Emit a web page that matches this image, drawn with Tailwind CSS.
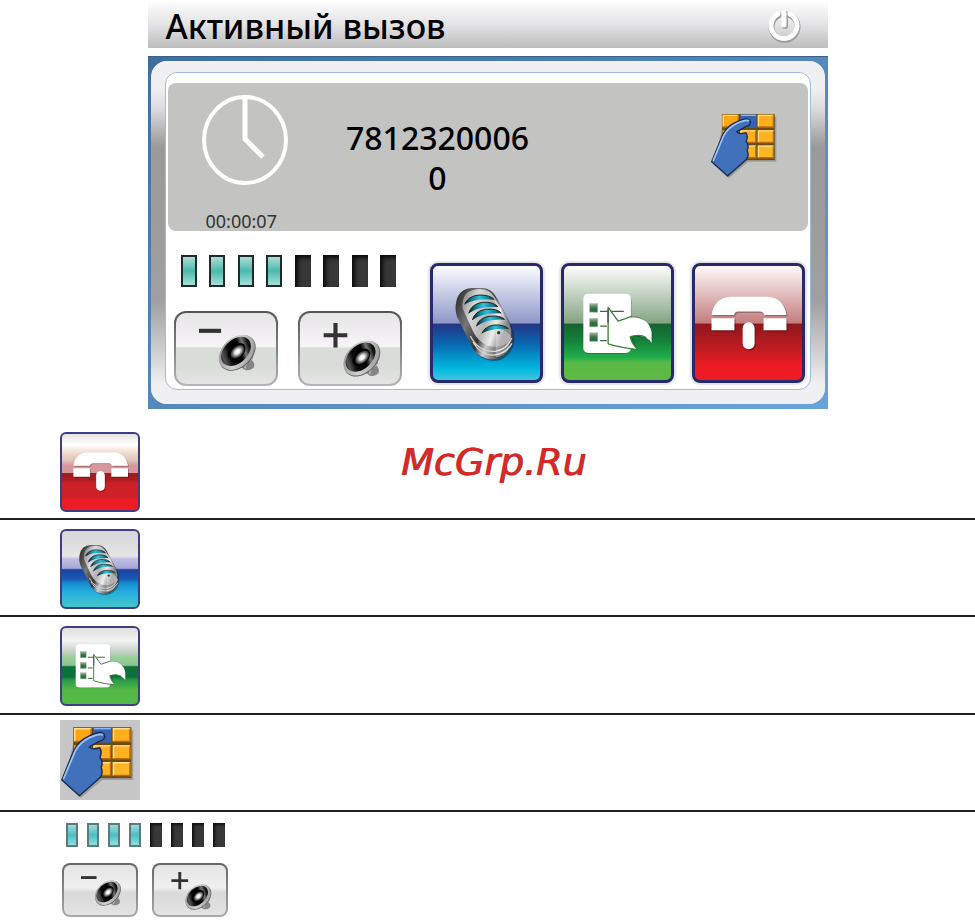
<!DOCTYPE html>
<html lang="ru">
<head>
<meta charset="utf-8">
<meta name="viewport" content="width=device-width, initial-scale=1">
<title>Активный вызов</title>
<script src="https://cdn.jsdelivr.net/npm/@tailwindcss/browser@4"></script>
</head>
<body class="bg-white text-black font-['Noto_Sans','DejaVu_Sans',sans-serif]">

<!-- Shared icon sprite -->
<svg class="absolute size-0" aria-hidden="true">
  <defs>
    <linearGradient id="metal" x1="0" y1="0" x2="1" y2="0.4">
      <stop offset="0" stop-color="#777"/><stop offset=".3" stop-color="#d8d8d8"/><stop offset=".6" stop-color="#b4b4b4"/><stop offset=".8" stop-color="#eee"/><stop offset="1" stop-color="#888"/>
    </linearGradient>
    <linearGradient id="base" x1="0" y1="0" x2="1" y2="0.5">
      <stop offset="0" stop-color="#222"/><stop offset=".35" stop-color="#777"/><stop offset=".6" stop-color="#333"/><stop offset=".75" stop-color="#ccc"/><stop offset="1" stop-color="#444"/>
    </linearGradient>
    <linearGradient id="slot" x1="0" y1="0" x2="1" y2="0">
      <stop offset="0" stop-color="#111"/><stop offset=".25" stop-color="#0f7f93"/><stop offset=".5" stop-color="#2cc3d8"/><stop offset=".8" stop-color="#0c7f92"/><stop offset="1" stop-color="#222"/>
    </linearGradient>
    <linearGradient id="key" x1="0" y1="0" x2="1" y2="1">
      <stop offset="0" stop-color="#ffa312"/><stop offset="1" stop-color="#ffb829"/>
    </linearGradient>
    <linearGradient id="rim" x1="0" y1="0" x2="1" y2="1">
      <stop offset="0" stop-color="#8a8a8a"/><stop offset=".5" stop-color="#d2d2d2"/><stop offset="1" stop-color="#8a8a8a"/>
    </linearGradient>
    <linearGradient id="bowl" x1="0" y1="0" x2="1" y2="0.3">
      <stop offset="0" stop-color="#000"/><stop offset=".2" stop-color="#555"/><stop offset=".4" stop-color="#0a0a0a"/><stop offset=".7" stop-color="#000"/><stop offset=".85" stop-color="#777"/><stop offset="1" stop-color="#111"/>
    </linearGradient>
    <radialGradient id="cone" cx=".5" cy=".5" r=".5">
      <stop offset="0" stop-color="#fff"/><stop offset=".35" stop-color="#eee"/><stop offset=".75" stop-color="#666"/><stop offset="1" stop-color="#222"/>
    </radialGradient>
    <linearGradient id="checks" x1="0" y1="0" x2="0" y2="1">
      <stop offset="0" stop-color="#9cb59b"/><stop offset=".5" stop-color="#3b7044"/><stop offset="1" stop-color="#14713a"/>
    </linearGradient>
  </defs>

  <symbol id="phone" viewBox="266 138 240 172">
    <g fill="#000" opacity=".25" transform="translate(4 4)">
      <path d="M276 198Q284 146 334 143H444Q494 146 502 198H436Q432 188 422 188H356Q346 188 344 198Z"/>
      <path d="M276 208H345V244H276ZM433 208H502V244H433Z"/><rect x="370" y="220" width="36" height="82" rx="18"/>
    </g>
    <g fill="#fff">
      <path d="M276 198Q284 146 334 143H444Q494 146 502 198H436Q432 188 422 188H356Q346 188 344 198Z"/>
      <path d="M276 208H345V244H276ZM433 208H502V244H433Z"/><rect x="370" y="220" width="36" height="82" rx="18"/>
    </g>
  </symbol>

  <symbol id="mic" viewBox="104 109 190 228">
    <path d="M112 168Q118 122 163 122H194Q219 124 232 148L274 228Q288 258 282 290Q262 339 220 337Q184 335 164 304L116 208Q108 188 112 168Z" fill="#000" opacity=".35"/>
    <path d="M109 164Q115 119 160 118H190Q215 120 228 144L270 224Q284 254 278 286Q258 334 216 332Q180 330 160 300L112 204Q105 184 109 164Z" fill="url(#base)"/>
    <path d="M152 262Q178 312 226 308Q262 304 276 268M160 280Q184 322 224 319Q260 314 277 284" fill="none" stroke="#d4d4d4" stroke-width="4"/>
    <path d="M130 158Q134 122 180 121Q210 121 224 144L268 226Q280 252 270 276Q248 300 208 292Q174 280 160 248L130 182Q126 170 130 158Z" fill="url(#metal)"/>
    <path d="M229 252L228 326Q250 323 264 306L275 266Q262 240 229 240Z" fill="#fff" opacity=".35"/>
    <g fill="url(#slot)">
      <path d="M135 167Q145 142 178 139Q212 139 224 153Q170 148 135 167Z"/>
      <path d="M147 194Q155 166 188 161Q224 159 235 175Q178 171 147 194Z"/>
      <path d="M158 214Q166 187 198 182Q234 179 245 194Q190 190 158 214Z"/>
      <path d="M170 233Q178 208 208 203Q244 199 255 213Q202 209 170 233Z"/>
      <path d="M187 254Q195 234 222 229Q254 227 267 241Q218 237 187 254Z"/>
    </g>
    <path d="M135 167Q145 142 178 139Q212 139 224 153M147 194Q155 166 188 161Q224 159 235 175M158 214Q166 187 198 182Q234 179 245 194M170 233Q178 208 208 203Q244 199 255 213M187 254Q195 234 222 229Q254 227 267 241" fill="none" stroke="#222" stroke-width="3"/>
    <circle cx="237" cy="252" r="5" fill="#333"/>
  </symbol>

  <symbol id="tools" viewBox="487 128 218 188">
    <path d="M510 137H622Q638 137 638 153V200Q690 200 701 250V282Q680 258 641 262L656 302L636 296Q630 313 618 313H510Q498 313 498 301V149Q498 137 510 137Z" fill="#000" opacity=".2"/>
    <rect x="494" y="133" width="142" height="177" rx="14" fill="#fff"/>
    <g fill="url(#checks)" stroke="#9db59d" stroke-width="2">
      <rect x="513" y="163" width="24" height="25"/><rect x="513" y="207" width="24" height="25"/><rect x="513" y="250" width="24" height="25"/>
    </g>
    <path d="M544 186H615M544 230H564M544 273H564" stroke="#37693e" stroke-width="4"/>
    <path d="M568 174L598 215Q630 202 646 204Q690 206 698 248V280Q680 254 634 259Q640 284 657 300Q620 296 568 283Z" fill="#fff"/>
    <path d="M568 283V174L598 215L638 201M568 283Q610 296 657 300Q638 282 634 262Q662 252 682 264" fill="none" stroke="#3f7f3c" stroke-width="4" stroke-linejoin="round"/>
    <path d="M568 180V220" stroke="#53635a" stroke-width="5"/>
  </symbol>

  <symbol id="keypad" viewBox="688 336 202 202">
    <path d="M732 350H888V486H803L745 535L700 494Z" fill="#000" opacity=".2"/>
    <rect x="724" y="342" width="159" height="139" fill="#6d4a12"/>
    <g fill="url(#key)">
      <path d="M726 344h48v38h-48zM832 344h48v38h-48zM726 391h48v38h-48zM779 391h48v38h-48zM832 391h48v38h-48zM779 437h48v38h-48zM832 437h48v38h-48z"/>
    </g>
    <path d="M779 344h49v40h-49z" fill="#3463b5"/>
    <g fill="none" stroke="#ffe08a" stroke-width="4">
      <path d="M728 380v-34h45M834 380v-34h45M781 427v-34h45M834 427v-34h45M781 473v-34h45M834 473v-34h45"/>
    </g>
    <path d="M781 346h46" stroke="#91b5f5" stroke-width="4"/>
    <g fill="none" stroke="#b96d08" stroke-width="4">
      <path d="M728 381h45v-35M834 381h45v-35M781 428h45v-35M834 428h45v-35M781 474h45v-35M834 474h45v-35"/>
    </g>
    <path d="M809 363Q813 376 796 380L768 396Q777 405 796 398Q804 409 797 424Q807 438 800 452Q807 468 797 480L741 529L693 486L726 405Q740 378 768 366Q802 349 809 363Z" fill="#4171bb" stroke="#192b4c" stroke-width="4" stroke-linejoin="round"/>
    <path d="M698 482L730 406Q744 382 770 370Q794 359 804 362" fill="none" stroke="#9cc4f4" stroke-width="5" stroke-linecap="round"/>
  </symbol>

  <symbol id="speaker" viewBox="228 277 126 124">
    <path d="M300 375L340 335Q348 345 340 362Q350 372 346 384Q336 396 318 393Q306 388 300 375Z" fill="#858585"/>
    <path d="M318 388Q318 366 342 356" fill="none" stroke="#bbb" stroke-width="5"/>
    <g transform="rotate(-43 291 336)">
      <ellipse cx="291" cy="340" rx="66" ry="46" fill="#5a5a5a"/>
      <ellipse cx="291" cy="337" rx="65" ry="46" fill="url(#rim)"/>
      <ellipse cx="291" cy="333" rx="55" ry="37" fill="url(#bowl)"/>
      <ellipse cx="292" cy="335" rx="33" ry="22" fill="#000"/>
      <ellipse cx="294" cy="337" rx="26" ry="17" fill="url(#cone)"/>
    </g>
  </symbol>

  <symbol id="quieter" viewBox="103 212 309 225">
    <path d="M172 262h70v13h-70z" fill="#333"/>
    <use href="#speaker" x="228" y="277" width="126" height="124"/>
  </symbol>
  <symbol id="louder" viewBox="472 212 309 225">
    <path d="M543 276h31v-32h13v32h31v13h-31v32h-13v-32h-31z" fill="#333"/>
    <use href="#speaker" x="599" y="295" width="126" height="124"/>
  </symbol>
</svg>

<main>
  <!-- Call screen -->
  <section class="mx-auto w-full max-w-[680px] bg-white" aria-label="Активный вызов">
    <header class="flex h-12 items-center justify-between bg-linear-to-b from-white via-[#e4e3e5] to-[#bebdbe] pr-6 pl-[18px]">
      <h1 class="pt-1 text-[34px] leading-10 font-medium">Активный вызов</h1>
      <button type="button" aria-label="Завершить работу" class="block">
        <svg class="size-10" viewBox="0 0 40 40" fill="none" stroke-linecap="round">
          <path d="M15 11A13 13 0 1 0 26 11M21 10V22" stroke="#999" stroke-width="6"/>
          <path d="M14 10A13 13 0 1 0 26 10M20 9V21" stroke="#fff" stroke-width="5"/>
        </svg>
      </button>
    </header>

    <div class="mt-2 border-t border-[#39618c] bg-linear-to-br from-[#416e9f] to-[#68a4dc] px-[3px] pt-1 pb-[5px]">
      <div class="rounded-2xl bg-[linear-gradient(#f0eff1_8%,#dcdadd_14%,#999a99_25%,#a09fa1_70%,#dad9dc_88%,#f0eff1_94%)]">
        <div class="rounded-2xl bg-[linear-gradient(#f0eff1,#f0eff1),linear-gradient(#f0eff1,#f0eff1)] bg-[size:100%_11px,100%_14px] bg-[position:top,bottom] bg-no-repeat px-[14px] pt-[11px] pb-[14px]">
          <div class="rounded-xl border border-[#9fbddb] bg-white px-[2px] pt-[10px] pb-[3px]">

            <div class="flex h-[148px] items-start rounded-lg bg-[#c3c3c1] pr-[31px] pl-[34px]">
              <div class="pt-3">
                <svg class="h-[92px] w-[87px]" viewBox="0 0 87 92" fill="none" stroke="#fff" stroke-width="4" aria-hidden="true">
                  <ellipse cx="43" cy="45" rx="41" ry="43"/>
                  <path d="M43 2V44L61 62" stroke-width="5"/>
                </svg>
                <time class="mt-[22px] ml-1 block text-lg leading-6 text-[#333]">00:00:07</time>
              </div>
              <p class="ml-[46px] w-[206px] pt-[35px] text-center text-[32px] leading-10 font-medium">7812320006<br>0</p>
              <button type="button" aria-label="Клавиатура" class="mt-[29px] ml-auto block">
                <svg class="size-[67px]"><use href="#keypad"/></svg>
              </button>
            </div>

            <div class="flex items-start justify-between pr-[3px] pl-[6px]">
              <div class="pt-6">
                <div role="meter" aria-label="Громкость" aria-valuemin="0" aria-valuemax="8" aria-valuenow="4" class="ml-[7px] flex w-[216px] justify-between">
                  <i class="h-8 w-4 border-2 border-[#202a29] bg-linear-to-b from-[#a9ddd5] via-[#48b9ac] to-[#a3e0da]"></i>
                  <i class="h-8 w-4 border-2 border-[#202a29] bg-linear-to-b from-[#a9ddd5] via-[#48b9ac] to-[#a3e0da]"></i>
                  <i class="h-8 w-4 border-2 border-[#202a29] bg-linear-to-b from-[#a9ddd5] via-[#48b9ac] to-[#a3e0da]"></i>
                  <i class="h-8 w-4 border-2 border-[#202a29] bg-linear-to-b from-[#a9ddd5] via-[#48b9ac] to-[#a3e0da]"></i>
                  <i class="h-8 w-4 bg-[#383838] shadow-[inset_3px_3px_4px_#0a0a0a]"></i>
                  <i class="h-8 w-4 bg-[#383838] shadow-[inset_3px_3px_4px_#0a0a0a]"></i>
                  <i class="h-8 w-4 bg-[#383838] shadow-[inset_3px_3px_4px_#0a0a0a]"></i>
                  <i class="h-8 w-4 bg-[#383838] shadow-[inset_3px_3px_4px_#0a0a0a]"></i>
                </div>
                <div class="mt-6 flex gap-5">
                  <button type="button" aria-label="Тише" class="h-[75px] w-[104px] rounded-xl bg-linear-to-b from-[#555] to-[#b5b5b5] p-[2px]">
                    <span class="block h-full rounded-[10px] bg-[linear-gradient(#e6e5e6,#f7f4f7_48%,#d8ddd7_49%,#d8ddd7_75%,#e5e5e5)]"><svg class="size-full"><use href="#quieter"/></svg></span>
                  </button>
                  <button type="button" aria-label="Громче" class="h-[75px] w-[104px] rounded-xl bg-linear-to-b from-[#555] to-[#b5b5b5] p-[2px]">
                    <span class="block h-full rounded-[10px] bg-[linear-gradient(#e6e5e6,#f7f4f7_48%,#d8ddd7_49%,#d8ddd7_75%,#e5e5e5)]"><svg class="size-full"><use href="#louder"/></svg></span>
                  </button>
                </div>
              </div>

              <div class="flex gap-[18px] pt-8">
                <button type="button" aria-label="Микрофон" class="flex h-[120px] w-[113px] items-center justify-center rounded-lg border-3 border-[#262a6c] bg-[linear-gradient(#fbfbff,#8d98c8_50%,#253584_51%,#0867b0_68%,#00b8df_90%,#45c4dc)] shadow-[0_0_2px_2px_#e2e2e2]">
                  <svg class="h-[76px] w-[64px]"><use href="#mic"/></svg>
                </button>
                <button type="button" aria-label="Параметры" class="flex h-[120px] w-[113px] items-center justify-center rounded-lg border-3 border-[#262a6c] bg-[linear-gradient(#fdfdfc,#84a583_50%,#166331_51%,#13803a_65%,#20ad4b_80%,#5ab947_85%,#60b944)] shadow-[0_0_2px_2px_#e2e2e2]">
                  <svg class="h-[63px] w-[73px]"><use href="#tools"/></svg>
                </button>
                <button type="button" aria-label="Завершить вызов" class="flex h-[120px] w-[113px] items-center justify-center rounded-lg border-3 border-[#262a6c] bg-[linear-gradient(#fffafa,#c47d7d_50%,#8f171b_51%,#b91b20_70%,#ed1c24_88%)] shadow-[0_0_2px_2px_#e2e2e2]">
                  <svg class="h-[57px] w-[80px]"><use href="#phone"/></svg>
                </button>
              </div>
            </div>
          </div>
        </div>
      </div>
    </div>
  </section>

  <!-- Legend -->
  <ul>
    <li class="grid grid-cols-[80px_1fr_80px] border-b-2 border-[#231f20] px-[60px] pt-[23px] pb-[6px]">
      <span role="img" aria-label="Завершить вызов" class="flex size-20 items-center justify-center rounded-md border-2 border-[#3c3f86] bg-[linear-gradient(#e6e2e2,#fff_14%,#efd8c9_26%,#dfc8bc_34%,#d9969a_42%,#d9969a_51%,#9d1a20_52%,#a91d22_60%,#cd2027_65%,#cd2027_83%,#ed1c24_86%)]">
        <svg class="h-[42px] w-[58px]"><use href="#phone"/></svg>
      </span>
      <p class="pt-2 pl-3 text-center font-['DejaVu_Sans',sans-serif] text-[38px] leading-[44px] text-[#dc2626] italic [text-shadow:1px_0_0_#8a3a3a]">McGrp.Ru</p>
    </li>
    <li class="border-b-2 border-[#231f20] px-[60px] pt-[9px] pb-[6px]">
      <span role="img" aria-label="Микрофон" class="flex size-20 items-center justify-center rounded-md border-2 border-[#3c3f86] bg-[linear-gradient(#d5d5d7,#e5e5e8_33%,#c2bfe2_37%,#a7a5d7_49%,#1a42a0_51%,#1a58b3_63%,#1588cc_68%,#22addf_80%,#45c7ca)]">
        <svg class="h-[52px] w-[46px]"><use href="#mic"/></svg>
      </span>
    </li>
    <li class="border-b-2 border-[#231f20] px-[60px] pt-[9px] pb-[7px]">
      <span role="img" aria-label="Параметры" class="flex size-20 items-center justify-center rounded-md border-2 border-[#3c3f86] bg-[linear-gradient(#dededf,#f4f4f4_16%,#c3cfc3_32%,#9bcf9b_38%,#8cc58f_49%,#0c7139_51%,#0c7139_64%,#2b9b49_69%,#55b948_82%)]">
        <svg class="h-[46px] w-[53px]"><use href="#tools"/></svg>
      </span>
    </li>
    <li class="border-b-2 border-[#231f20] px-[60px] pt-[5px] pb-[10px]">
      <span role="img" aria-label="Клавиатура" class="block size-20 bg-[#c6c6c6] pt-[5px]">
        <svg class="size-[74px]"><use href="#keypad"/></svg>
      </span>
    </li>
    <li class="px-[62px] pt-[11px]">
      <div role="img" aria-label="Уровень громкости" class="ml-1 flex w-[159px] justify-between">
        <i class="h-6 w-3 border-2 border-[#5d7b7b] bg-linear-to-b from-[#9adbdd] via-[#4abfc0] to-[#8be0e3]"></i>
        <i class="h-6 w-3 border-2 border-[#5d7b7b] bg-linear-to-b from-[#9adbdd] via-[#4abfc0] to-[#8be0e3]"></i>
        <i class="h-6 w-3 border-2 border-[#5d7b7b] bg-linear-to-b from-[#9adbdd] via-[#4abfc0] to-[#8be0e3]"></i>
        <i class="h-6 w-3 border-2 border-[#5d7b7b] bg-linear-to-b from-[#9adbdd] via-[#4abfc0] to-[#8be0e3]"></i>
        <i class="h-6 w-3 bg-[#383838] shadow-[inset_2px_2px_3px_#111]"></i>
        <i class="h-6 w-3 bg-[#383838] shadow-[inset_2px_2px_3px_#111]"></i>
        <i class="h-6 w-3 bg-[#383838] shadow-[inset_2px_2px_3px_#111]"></i>
        <i class="h-6 w-3 bg-[#383838] shadow-[inset_2px_2px_3px_#111]"></i>
      </div>
      <div class="mt-4 flex gap-[14px]">
        <span role="img" aria-label="Тише" class="block h-[54px] w-[76px] rounded-lg bg-linear-to-b from-[#666] to-[#aaa] p-[2px]">
          <span class="block h-full rounded-md bg-[linear-gradient(#e4e4e4,#f0f0f0_45%,#d9d9d9_55%,#e3e3e3)]"><svg class="size-full"><use href="#quieter"/></svg></span>
        </span>
        <span role="img" aria-label="Громче" class="block h-[54px] w-[76px] rounded-lg bg-linear-to-b from-[#666] to-[#aaa] p-[2px]">
          <span class="block h-full rounded-md bg-[linear-gradient(#e4e4e4,#f0f0f0_45%,#d9d9d9_55%,#e3e3e3)]"><svg class="size-full"><use href="#louder"/></svg></span>
        </span>
      </div>
    </li>
  </ul>
</main>
</body>
</html>
